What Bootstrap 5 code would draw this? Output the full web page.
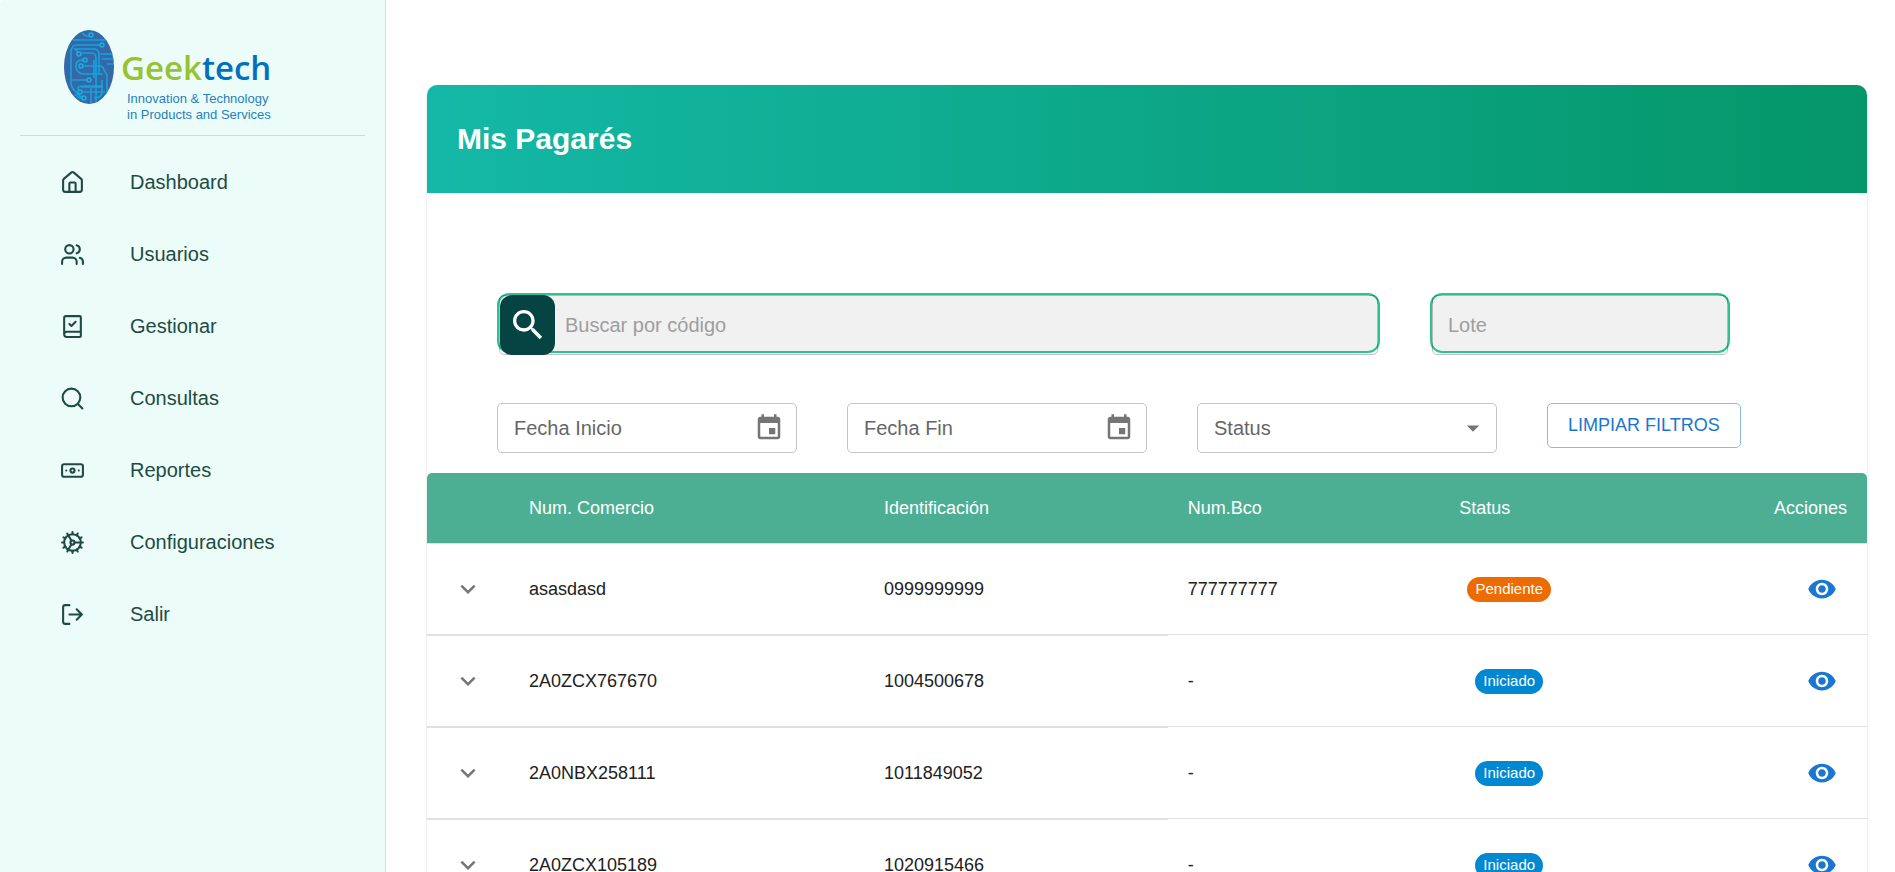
<!DOCTYPE html>
<html lang="es">
<head>
<meta charset="utf-8">
<meta name="viewport" content="width=device-width, initial-scale=1">
<title>Mis Pagarés</title>
<link href="https://cdn.jsdelivr.net/npm/bootstrap@5.3.0/dist/css/bootstrap.min.css" rel="stylesheet">
<style>
  body { font-family: "Liberation Sans", Arial, sans-serif; font-size: 18px; color: #212121; }
  .sidebar { width: 386px; background: #ecfdf9; border-right: 1px solid #d3dfdc; padding: 30px 20px 0; border-top-left-radius: 4px; }
  .brand { height: 106px; padding-left: 44px; border-bottom: 1px solid #cddcd8; }
  .side-nav { padding-top: 10px; }
  .side-nav .nav-link { height: 72px; padding: 0 40px; gap: 45px; font-size: 20px; color: #1f4a44; }
  .side-nav svg { width: 25px; height: 25px; fill: none; stroke: currentColor; stroke-width: 2; stroke-linecap: round; stroke-linejoin: round; }
  main { padding: 85px 28px 0 41px; min-width: 0; }
  .panel { border-radius: 10px; box-shadow: 0 2px 1px -1px rgba(0,0,0,.2), 0 1px 1px rgba(0,0,0,.14), 0 1px 3px rgba(0,0,0,.12); }
  .panel-head { height: 108px; padding: 0 30px; border-radius: 10px 10px 0 0; background: linear-gradient(to right, #14b8a6, #059669); }
  .panel-head h1 { font-size: 30px; font-weight: 700; }
  .filters { padding: 100px 0 20px 70px; gap: 50px; }
  .filter-line { gap: 50px; }
  .filter-top { margin-right: 137px; }
  .w-field { width: 300px; }
  .soft-box { position: relative; height: 60px; border: 2px solid #2fc192; border-radius: 12px; background: #f1f1f1; }
  .soft-box::after { content: ""; position: absolute; inset: 0 0 -4px; border: 1px solid rgba(0,0,0,.24); border-radius: 5px; pointer-events: none; }
  .soft-row { height: 60px; }
  .soft-row input { border: 0; background: transparent; font-size: 20px; outline: 0; min-width: 0; padding: 0 16px; }
  .soft-row .search-btn + label + input { padding-left: 10px; }
  .soft-row input::placeholder { color: #9e9e9e; opacity: 1; }
  .search-btn { position: relative; z-index: 1; width: 55px; height: 60px; margin-left: 1px; border: 0; border-radius: 12px; background: #064444; color: #fff; padding: 0; }
  .line-field { height: 50px; border: 1px solid #c4c4c4; border-radius: 5px; }
  .line-field input, .line-field.form-select { font-size: 20px; color: #666; }
  .line-field input { border: 0; outline: 0; background: transparent; min-width: 0; padding: 0 0 0 16px; }
  .line-field input::placeholder { color: #666; opacity: 1; }
  .line-field button { border: 0; background: none; color: #757575; padding: 0; width: 30px; margin-right: 12px; }
  .line-field.form-select { padding: 0 48px 0 16px; background-color: #fff; background-size: 30px 30px; background-position: right 8px center;
    background-image: url("data:image/svg+xml,%3Csvg xmlns='http://www.w3.org/2000/svg' viewBox='0 0 24 24'%3E%3Cpath fill='%23757575' d='M7 10l5 5 5-5z'/%3E%3C/svg%3E"); }
  .btn-clear { height: 45px; padding: 0 20px; border: 1px solid #8cbae8; border-radius: 5px; font-size: 18px; color: #1976d2; }
  svg.fill { fill: currentColor; display: block; }
  .pagares { table-layout: fixed; width: 100%; border-collapse: separate; border-spacing: 0; }
  .pagares th, .pagares td { padding: 0 20px; border-bottom: 1px solid #e0e0e0; vertical-align: middle; }
  .pagares th { height: 71px; font-weight: 400; color: #fff; background: #4caf93; }
  .pagares th:first-child { border-top-left-radius: 5px; }
  .pagares th:last-child { border-top-right-radius: 5px; }
  .pagares tbody td { height: 91px; }
  .pagares tbody .detail td { height: 1px; padding: 0; line-height: 0; }
  .pagares tbody .detail td + td { border: 0; }
  .col-toggle { width: 82px; } .col-num { width: 24.65%; } .col-ident { width: 21.1%; } .col-bank { width: 18.85%; }
  .icon-btn { border: 0; background: none; padding: 0; color: #757575; }
  .icon-btn.view { color: #1976d2; margin-right: 10px; }
  .chip-slot { width: 100px; }
  .chip { height: 25px; padding: 0 8px; border-radius: 13px; font-size: 15px; color: #fff; background: #0288d1; }
  .chip.pending { background: #ed6c02; }
</style>
</head>
<body>
<svg class="d-none" aria-hidden="true">
  <symbol id="i-down" viewBox="0 0 24 24"><path d="M7.41 8.59 12 13.17l4.59-4.58L18 10l-6 6-6-6z"/></symbol>
  <symbol id="i-eye" viewBox="0 0 24 24"><path d="M12 4.5C7 4.5 2.73 7.61 1 12c1.73 4.39 6 7.5 11 7.5s9.27-3.11 11-7.5c-1.73-4.39-6-7.5-11-7.5zM12 17c-2.76 0-5-2.24-5-5s2.24-5 5-5 5 2.24 5 5-2.24 5-5 5zm0-8c-1.66 0-3 1.34-3 3s1.34 3 3 3 3-1.34 3-3-1.34-3-3-3z"/></symbol>
  <symbol id="i-event" viewBox="0 0 24 24"><path d="M17 12h-5v5h5v-5zM16 1v2H8V1H6v2H5c-1.11 0-1.99.9-1.99 2L3 19c0 1.1.89 2 2 2h14c1.1 0 2-.9 2-2V5c0-1.1-.9-2-2-2h-1V1h-2zm3 18H5V8h14v11z"/></symbol>
</svg>
<div class="d-flex vh-100 overflow-hidden">
  <aside class="sidebar flex-shrink-0">
    <div class="brand">
      <svg width="230" height="100" viewBox="0 0 230 100" role="img" aria-label="Geektech">
        <defs><clipPath id="oval"><ellipse cx="25" cy="37" rx="25" ry="37"/></clipPath></defs>
        <g clip-path="url(#oval)">
          <rect width="50" height="75" fill="#3568a8"/>
          <g fill="none" stroke="#17a3da" stroke-width="1.6">
            <path d="M18 3l4 3h4M9 10h36M36 15H13q-5 0-6 6v31q0 6 5 10l6 6"/>
            <path d="M14 22l-3-3h19q5 0 5 6v18M18 23h10q4 0 4 6v45M50 24H36M50 29H38M50 34h-7"/>
            <path d="M20 30h-3q-5 1-5 6 0 6 6 8h21M19 36h17q3 0 4 4l3 5v18M30 30v18M8 50h15M38 50v12q0 6-8 6"/>
            <path d="M17 62h24M17 57h22M16 62q-5-6 3-6h20M19 68h-4l-4-4M27 58v18"/>
          </g>
          <g fill="#3568a8" stroke="#17b4e2" stroke-width="1.4">
            <circle cx="27" cy="5" r="2"/><circle cx="38" cy="15" r="2"/><circle cx="15" cy="24" r="2"/><circle cx="21" cy="30" r="2"/><circle cx="17" cy="36" r="2"/><circle cx="25" cy="50" r="2"/><circle cx="16" cy="62" r="2"/><circle cx="20" cy="68" r="2"/>
          </g>
        </g>
        <text x="57" y="50" font-family="'Open Sans', sans-serif" font-weight="600" font-size="33" fill="#97c231">Geek<tspan fill="#0071bc">tech</tspan></text>
        <g font-family="'Liberation Sans', sans-serif" font-size="13" fill="#2580bd"><text x="63" y="73">Innovation &amp; Technology</text><text x="63" y="89">in Products and Services</text></g>
      </svg>
    </div>
    <nav class="nav flex-column side-nav">
      <a class="nav-link d-flex align-items-center" href="#"><svg viewBox="0 0 24 24"><path d="M15 21v-8a1 1 0 0 0-1-1h-4a1 1 0 0 0-1 1v8"/><path d="M3 10a2 2 0 0 1 .7-1.5l7-6a2 2 0 0 1 2.6 0l7 6A2 2 0 0 1 21 10v9a2 2 0 0 1-2 2H5a2 2 0 0 1-2-2z"/></svg>Dashboard</a>
      <a class="nav-link d-flex align-items-center" href="#"><svg viewBox="0 0 24 24"><path d="M16 21v-2a4 4 0 0 0-4-4H6a4 4 0 0 0-4 4v2M22 21v-2a4 4 0 0 0-3-3.87M16 3.13a4 4 0 0 1 0 7.75"/><circle cx="9" cy="7" r="4"/></svg>Usuarios</a>
      <a class="nav-link d-flex align-items-center" href="#"><svg viewBox="0 0 24 24"><path d="M4 19.5v-16A1.500 1.500 0 0 1 5.500 2H19a1 1 0 0 1 1 1v18a1 1 0 0 1-1 1H6.500a2.500 2.500 0 0 1 0-5H20M9 9.500l2 2 4-4"/></svg>Gestionar</a>
      <a class="nav-link d-flex align-items-center" href="#"><svg viewBox="0 0 24 24"><circle cx="11" cy="11" r="8.500"/><path d="m21.500 21.500-4.300-4.300"/></svg>Consultas</a>
      <a class="nav-link d-flex align-items-center" href="#"><svg viewBox="0 0 24 24"><rect x="2" y="6" width="20" height="12" rx="2"/><circle cx="12" cy="12" r="2"/><path d="M6 12h.01M18 12h.01"/></svg>Reportes</a>
      <a class="nav-link d-flex align-items-center" href="#"><svg viewBox="0 0 24 24"><circle cx="12" cy="12" r="8"/><circle cx="12" cy="12" r="2"/><path d="M12 2v2M12 22v-2M17 20.66l-1-1.730M11 10.270 7 3.340M20.660 17l-1.730-1M3.340 7l1.730 1M14 12h8M2 12h2M20.660 7l-1.730 1M3.340 17l1.730-1M17 3.340l-1 1.730M11 13.730l-4 6.930"/></svg>Configuraciones</a>
      <a class="nav-link d-flex align-items-center" href="#"><svg viewBox="0 0 24 24"><path d="M9 21H5a2 2 0 0 1-2-2V5a2 2 0 0 1 2-2h4M16 17l5-5-5-5M21 12H9"/></svg>Salir</a>
    </nav>
  </aside>

  <main class="flex-grow-1">
    <section class="panel bg-white">
      <header class="panel-head d-flex align-items-center"><h1 class="m-0 text-white">Mis Pagarés</h1></header>
      <form class="filters d-flex flex-column" onsubmit="return false">
        <div class="filter-line filter-top d-flex">
          <div class="soft-box flex-grow-1">
            <div class="soft-row d-flex">
              <button class="search-btn d-flex align-items-center justify-content-center flex-shrink-0" aria-label="Buscar"><svg class="fill" width="40" height="40" viewBox="0 0 24 24"><path d="M15.5 14h-.79l-.28-.27C15.41 12.59 16 11.11 16 9.5 16 5.91 13.09 3 9.5 3S3 5.91 3 9.5 5.91 16 9.5 16c1.61 0 3.09-.59 4.23-1.57l.27.28v.79l5 4.99L20.49 19l-4.99-5zm-6 0C7.01 14 5 11.99 5 9.500S7.010 5 9.500 5 14 7.010 14 9.500 11.990 14 9.500 14z"/></svg></button>
              <label class="visually-hidden" for="codigo">Buscar por código</label>
              <input class="flex-grow-1" id="codigo" type="text" placeholder="Buscar por código">
            </div>
          </div>
          <div class="soft-box w-field flex-shrink-0">
            <div class="soft-row d-flex">
              <label class="visually-hidden" for="lote">Lote</label>
              <input class="w-100" id="lote" type="text" placeholder="Lote">
            </div>
          </div>
        </div>
        <div class="filter-line d-flex align-items-start">
          <div class="line-field w-field d-flex align-items-center">
            <label class="visually-hidden" for="inicio">Fecha Inicio</label>
            <input class="flex-grow-1" id="inicio" type="text" placeholder="Fecha Inicio">
            <button type="button" aria-label="Elegir fecha de inicio"><svg class="fill" width="30" height="30"><use href="#i-event"/></svg></button>
          </div>
          <div class="line-field w-field d-flex align-items-center">
            <label class="visually-hidden" for="fin">Fecha Fin</label>
            <input class="flex-grow-1" id="fin" type="text" placeholder="Fecha Fin">
            <button type="button" aria-label="Elegir fecha de fin"><svg class="fill" width="30" height="30"><use href="#i-event"/></svg></button>
          </div>
          <label class="visually-hidden" for="estado">Status</label>
          <select class="form-select line-field w-field" id="estado"><option>Status</option><option>Pendiente</option><option>Iniciado</option></select>
          <button type="button" class="btn btn-clear text-nowrap">LIMPIAR FILTROS</button>
        </div>
      </form>
      <table class="pagares">
        <colgroup><col class="col-toggle"><col class="col-num"><col class="col-ident"><col class="col-bank"><col></colgroup>
        <thead><tr><th></th><th>Num. Comercio</th><th>Identificación</th><th>Num.Bco</th><th><div class="d-flex justify-content-between"><span>Status</span><span>Acciones</span></div></th></tr></thead>
        <tbody id="rows"></tbody>
      </table>
    </section>
  </main>
</div>
<script src="https://cdn.jsdelivr.net/npm/bootstrap@5.3.0/dist/js/bootstrap.bundle.min.js"></script>
<script>
  const pagares = [
    ['asasdasd', '0999999999', '777777777', 'Pendiente'],
    ['2A0ZCX767670', '1004500678', '-', 'Iniciado'],
    ['2A0NBX258111', '1011849052', '-', 'Iniciado'],
    ['2A0ZCX105189', '1020915466', '-', 'Iniciado']
  ];
  document.getElementById('rows').innerHTML = pagares.map(([num, ident, bank, status]) => `
    <tr>
      <td><button class="icon-btn d-block mx-auto" aria-label="Expandir"><svg class="fill" width="30" height="30"><use href="#i-down"/></svg></button></td>
      <td>${num}</td><td>${ident}</td><td>${bank}</td>
      <td><div class="d-flex align-items-center justify-content-between">
        <div class="chip-slot d-flex justify-content-center"><span class="chip d-inline-flex align-items-center ${status === 'Pendiente' ? 'pending' : ''}">${status}</span></div>
        <button class="icon-btn view" aria-label="Ver"><svg class="fill" width="30" height="30"><use href="#i-eye"/></svg></button>
      </div></td>
    </tr>
    <tr class="detail"><td colspan="3"></td><td colspan="2"></td></tr>`).join('');
</script>
</body>
</html>
